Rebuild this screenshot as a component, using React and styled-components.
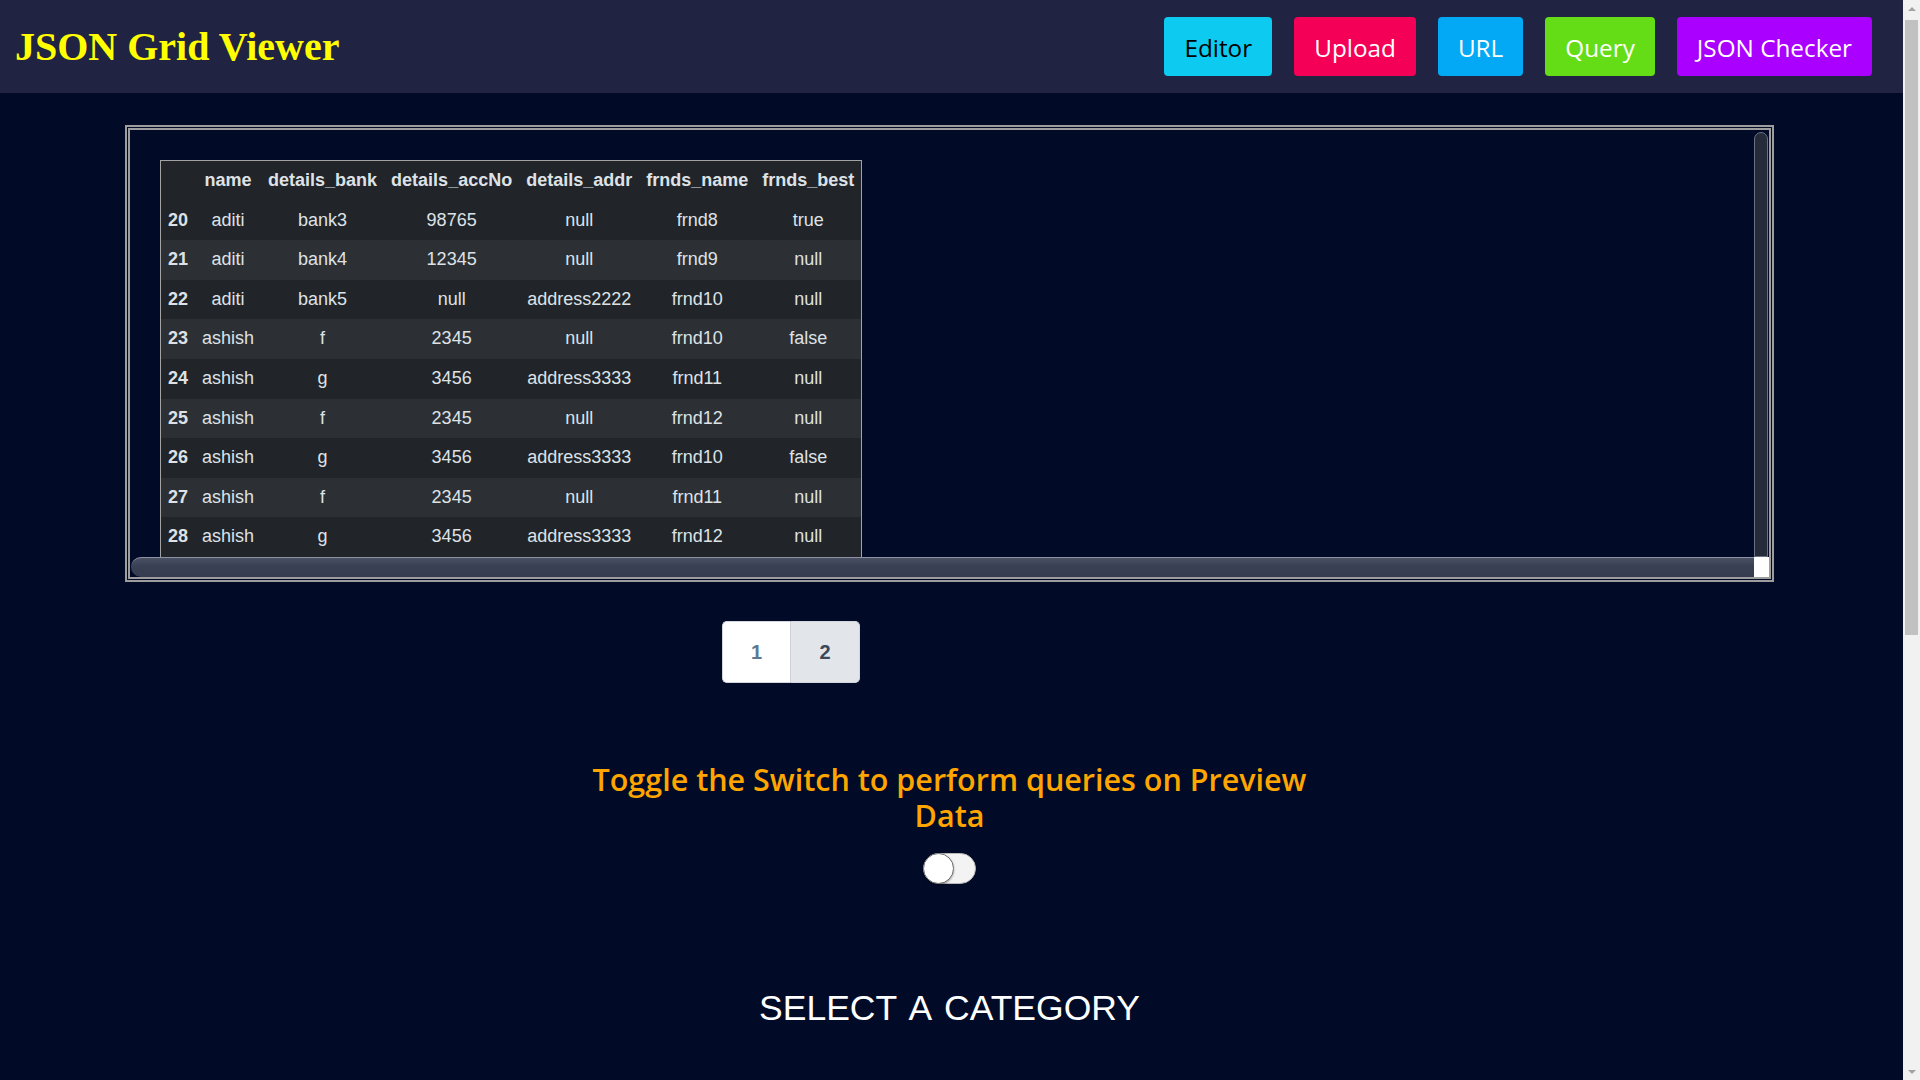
import React from "react";
import styled, { createGlobalStyle } from "styled-components";

const GlobalStyle = createGlobalStyle`
  html, body {
    margin: 0;
    padding: 0;
    background: #010b28;
  }
  body {
    font-family: "Liberation Sans", Arial, sans-serif;
  }
  * { box-sizing: border-box; }
`;

const Page = styled.div`
  min-height: 1830px;
  margin-right: 17px;
  background: #010b28;
  display: flex;
  flex-direction: column;
`;

const PageScrollbar = styled.div`
  position: fixed;
  top: 0;
  right: 0;
  width: 17px;
  height: 100vh;
  background: #f1f1f1;
  display: flex;
  flex-direction: column;
`;

const ScrollArrow = styled.div`
  height: 17px;
  display: flex;
  align-items: center;
  justify-content: center;
  &::before {
    content: "";
    border-left: 4px solid transparent;
    border-right: 4px solid transparent;
    ${(p) =>
      p.$down
        ? "border-top: 4px solid #a3a3a3;"
        : "border-bottom: 4px solid #a3a3a3;"}
  }
`;

const ScrollTrack = styled.div`
  flex: 1;
  padding: 3px 2px 0;
`;

const ScrollThumb = styled.div`
  height: 615px;
  background: #c1c1c1;
`;

const Header = styled.header`
  height: 93px;
  background: #202342;
  display: flex;
  align-items: center;
  justify-content: space-between;
  padding: 0 31px 0 15px;
`;

const Title = styled.h1`
  margin: 0;
  font-family: "Liberation Serif", "Times New Roman", serif;
  font-weight: 700;
  font-size: 40px;
  color: #ffff00;
  line-height: 1;
`;

const Nav = styled.nav`
  display: flex;
  gap: 22px;
`;

const NavButton = styled.button`
  height: 59px;
  padding: 2px 20px 0;
  border: none;
  border-radius: 4px;
  background: ${(p) => p.$bg};
  color: ${(p) => p.$fg || "#ffffff"};
  font-family: "Open Sans", "Noto Sans", sans-serif;
  font-size: 24.3px;
  font-weight: 400;
  cursor: pointer;
`;

const ScrollBox = styled.div`
  width: 1649px;
  height: 457px;
  margin: 32px 0 0 125px;
  border: 5px double #9d9d9d;
  display: grid;
  grid-template-columns: 1fr 15px;
  grid-template-rows: 1fr 20px;
  overflow: hidden;
`;

const Viewport = styled.div`
  overflow: hidden;
  padding: 30px 0 0 30px;
`;

const VBar = styled.div`
  background: #262b3a;
  border: 1px solid #6b7182;
  border-radius: 7px 7px 0 0;
  margin: 2px 1px 0 0;
`;

const HBar = styled.div`
  background: linear-gradient(#4a5164, #3a4155 40%, #353c50);
  border-top: 1px solid #8d93a3;
  border-radius: 10px 0 0 10px;
  margin: 0 0 0 1px;
`;

const Corner = styled.div`
  background: #ffffff;
`;

const Table = styled.table`
  border-collapse: collapse;
  border: 1px solid #a3a3a3;
  background: #212529;
  color: #dee2e6;
  font-family: "Liberation Sans", Arial, sans-serif;
  font-size: 18px;
`;

const Row = styled.tr`
  background: ${(p) => (p.$striped ? "#2c3034" : "#212529")};
`;

const HeadCell = styled.th`
  padding: 9px 7px;
  line-height: 21.6px;
  font-weight: 700;
  text-align: center;
  white-space: nowrap;
`;

const Cell = styled.td`
  padding: 9px 7px;
  line-height: 21.6px;
  text-align: center;
  white-space: nowrap;
`;

const Pagination = styled.div`
  display: flex;
  margin: 39px 0 0 722px;
`;

const PageButton = styled.button`
  width: 69px;
  height: 62px;
  border: 1px solid #d3d7dd;
  background: ${(p) => (p.$active ? "#ffffff" : "#e2e5ea")};
  color: ${(p) => (p.$active ? "#5b7894" : "#3b4859")};
  font-family: "Liberation Sans", Arial, sans-serif;
  font-weight: 700;
  font-size: 20px;
  &:first-child {
    border-radius: 5px 0 0 5px;
    border-right: 1px solid #cfd3d9;
  }
  &:last-child {
    border-radius: 0 5px 5px 0;
    border-left: none;
  }
`;

const ToggleSection = styled.section`
  display: flex;
  flex-direction: column;
  align-items: center;
  margin: 79px 4px 0 0;
`;

const ToggleText = styled.h3`
  margin: 0;
  max-width: 770px;
  text-align: center;
  font-family: "Open Sans", "Noto Sans", sans-serif;
  font-weight: 600;
  font-size: 30.5px;
  line-height: 35.5px;
  color: #ffa500;
`;

const SwitchTrack = styled.div`
  margin-top: 20px;
  width: 53px;
  height: 31px;
  border-radius: 16px;
  background: #f3f3f3;
  border: 1px solid #b8b8b8;
  display: flex;
  align-items: center;
`;

const SwitchKnob = styled.div`
  width: 31px;
  height: 31px;
  margin-left: -1px;
  border-radius: 50%;
  background: #ffffff;
  border: 1px solid #6f6f6f;
  box-shadow: 0 1px 2px rgba(0, 0, 0, 0.35);
`;

const CategoryTitle = styled.h2`
  margin: 104px 4px 0 0;
  text-align: center;
  font-family: "Liberation Sans", Arial, sans-serif;
  font-weight: 400;
  font-size: 35.5px;
  line-height: 40px;
  word-spacing: 4px;
  color: #ffffff;
`;

const columns = ["name", "details_bank", "details_accNo", "details_addr", "frnds_name", "frnds_best"];

const rows = [
  [20, "aditi", "bank3", "98765", "null", "frnd8", "true"],
  [21, "aditi", "bank4", "12345", "null", "frnd9", "null"],
  [22, "aditi", "bank5", "null", "address2222", "frnd10", "null"],
  [23, "ashish", "f", "2345", "null", "frnd10", "false"],
  [24, "ashish", "g", "3456", "address3333", "frnd11", "null"],
  [25, "ashish", "f", "2345", "null", "frnd12", "null"],
  [26, "ashish", "g", "3456", "address3333", "frnd10", "false"],
  [27, "ashish", "f", "2345", "null", "frnd11", "null"],
  [28, "ashish", "g", "3456", "address3333", "frnd12", "null"],
];

const navButtons = [
  { label: "Editor", bg: "#0dcaf0", fg: "#000000" },
  { label: "Upload", bg: "#f50057" },
  { label: "URL", bg: "#03a9f4" },
  { label: "Query", bg: "#64dd17" },
  { label: "JSON Checker", bg: "#aa00ff" },
];

export default function App() {
  return (
    <>
      <GlobalStyle />
      <Page>
        <Header>
          <Title>JSON Grid Viewer</Title>
          <Nav>
            {navButtons.map((b) => (
              <NavButton key={b.label} $bg={b.bg} $fg={b.fg}>
                {b.label}
              </NavButton>
            ))}
          </Nav>
        </Header>

        <ScrollBox>
          <Viewport>
            <Table>
              <thead>
                <Row>
                  <HeadCell />
                  {columns.map((c) => (
                    <HeadCell key={c}>{c}</HeadCell>
                  ))}
                </Row>
              </thead>
              <tbody>
                {rows.map((r, i) => (
                  <Row key={r[0]} $striped={i % 2 === 1}>
                    <HeadCell>{r[0]}</HeadCell>
                    {r.slice(1).map((v, j) => (
                      <Cell key={j}>{v}</Cell>
                    ))}
                  </Row>
                ))}
              </tbody>
            </Table>
          </Viewport>
          <VBar />
          <HBar />
          <Corner />
        </ScrollBox>

        <Pagination>
          <PageButton $active>1</PageButton>
          <PageButton>2</PageButton>
        </Pagination>

        <ToggleSection>
          <ToggleText>Toggle the Switch to perform queries on Preview Data</ToggleText>
          <SwitchTrack>
            <SwitchKnob />
          </SwitchTrack>
        </ToggleSection>

        <CategoryTitle>SELECT A CATEGORY</CategoryTitle>
      </Page>
      <PageScrollbar>
        <ScrollArrow />
        <ScrollTrack>
          <ScrollThumb />
        </ScrollTrack>
        <ScrollArrow $down />
      </PageScrollbar>
    </>
  );
}
